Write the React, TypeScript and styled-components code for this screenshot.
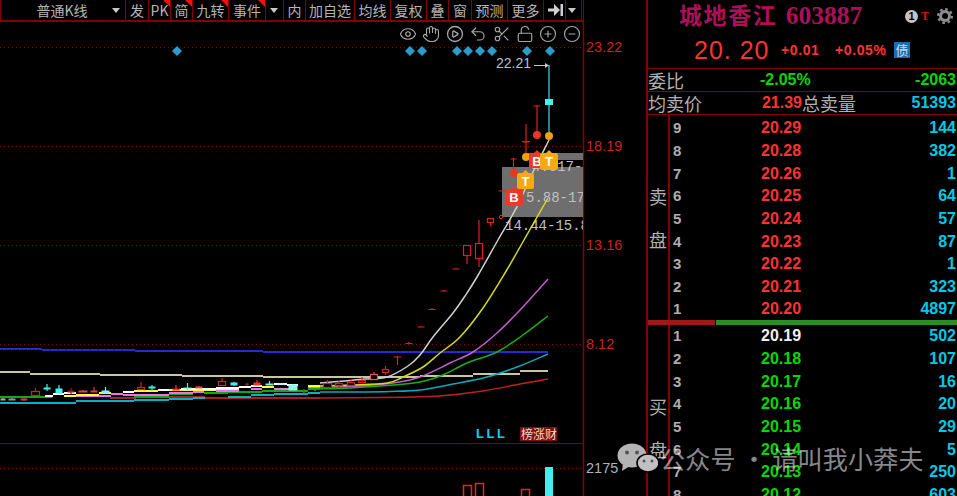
import React from "react";
import styled, { createGlobalStyle } from "styled-components";
import { Eye, Hand, CirclePlay, Undo2, Scissors, LockOpen, CirclePlus, CircleMinus } from "lucide-react";

const Global = createGlobalStyle`
  html, body { margin: 0; padding: 0; background: #000; overflow: hidden; }
  #root { width: 957px; height: 496px; }
`;

const CJK = `"Noto Sans CJK SC", "Liberation Sans", sans-serif`;
const DIGIT = `"Liberation Sans", "Noto Sans CJK SC", sans-serif`;
const LINE = "#860000";

const Page = styled.div`
  position: relative;
  display: flex;
  width: 957px;
  height: 496px;
  overflow: hidden;
  background: #000;
  font-family: ${CJK};
`;
const Left = styled.div`
  display: flex;
  flex-direction: column;
  width: 646px;
  flex: none;
`;
const ChartWrap = styled.div`
  position: relative;
  flex: 1;
  height: 474px;
`;
const Toolbar = styled.div`
  display: flex;
  width: 584px;
  height: 22px;
  box-sizing: border-box;
  border-bottom: 2px solid ${LINE};
  border-left: 1px solid ${LINE};
  border-right: 1px solid ${LINE};
  flex: none;
`;
const Tab = styled.div<{ $w: number; $flag?: boolean; $align?: string }>`
  position: relative;
  width: ${(p) => p.$w}px;
  flex: none;
  box-sizing: border-box;
  border-right: 1px solid ${LINE};
  display: flex;
  align-items: center;
  justify-content: ${(p) => p.$align || "center"};
  color: #b4b4b4;
  font-size: 14px;
  line-height: 20px;
  white-space: nowrap;
  overflow: hidden;
  &::after {
    content: "";
    display: ${(p) => (p.$flag ? "block" : "none")};
    position: absolute;
    top: 0;
    right: 0;
    border-top: 7px solid #f01010;
    border-left: 7px solid transparent;
  }
`;
const Caret = styled.span`
  position: absolute;
  right: 5px;
  top: 8px;
  border-top: 5px solid #c8c8c8;
  border-left: 4.5px solid transparent;
  border-right: 4.5px solid transparent;
`;
const MainLabel = styled.span`
  margin-left: 6px;
  margin-right: 8px;
`;
const ChartSvg = styled.svg`
  display: block;
`;
const IconRow = styled.div`
  position: absolute;
  top: 3px;
  left: 399px;
  display: flex;
  gap: 5.4px;
  color: #a8a8a8;
`;

const Right = styled.div`
  width: 311px;
  flex: none;
  box-sizing: border-box;
  border-left: 2px solid ${LINE};
  display: flex;
  flex-direction: column;
`;
const TitleRow = styled.div`
  height: 32px;
  display: flex;
  align-items: center;
  padding-left: 31px;
  flex: none;
`;
const Title = styled.div`
  color: #ad1058;
  font-weight: 700;
  font-size: 23px;
  letter-spacing: 1.6px;
  white-space: nowrap;
  line-height: 30px;
  width: 226px;
  flex: none;
  font-family: "Liberation Serif", "Noto Sans CJK SC", serif;
`;
const TitleCode = styled.span`
  font-size: 25.5px;
  letter-spacing: 0;
  margin-left: 1px;
`;
const InfoDot = styled.span`
  width: 13px;
  height: 13px;
  border-radius: 50%;
  background: #c4c4c4;
  color: #000;
  font: 700 11px/13px "Liberation Sans", sans-serif;
  text-align: center;
`;
const RedT = styled.span`
  color: #e01010;
  font: 700 12px/13px "Liberation Serif", serif;
  margin-left: 3px;
`;
const Gear = styled.svg`
  margin-left: 8px;
`;
const PriceRow = styled.div`
  height: 37px;
  box-sizing: border-box;
  padding-left: 46px;
  display: flex;
  align-items: center;
  flex: none;
  border-bottom: 1px solid ${LINE};
  color: #ff3232;
`;
const BigPrice = styled.span`
  font: 400 25px/30px "Liberation Sans", sans-serif;
  letter-spacing: 1px;
  width: 87px;
  white-space: pre;
`;
const Delta = styled.span<{ $w: number }>`
  font: 700 14px/20px "Liberation Sans", sans-serif;
  letter-spacing: 0.6px;
  width: ${(p) => p.$w}px;
`;
const BondTag = styled.span`
  width: 16px;
  height: 16px;
  background: #1f6bb0;
  color: #c8dcf0;
  font-size: 13px;
  line-height: 16px;
  text-align: center;
`;
const StatRow = styled.div`
  height: 23px;
  flex: none;
  box-sizing: border-box;
  border-bottom: 1px solid ${LINE};
  display: grid;
  grid-template-columns: 112px 42px 1fr;
  align-items: center;
  position: relative;
`;
const StatLabel = styled.span`
  color: #b0b0b0;
  font-size: 18px;
  line-height: 22px;
  white-space: nowrap;
`;
const Num = styled.span<{ $c: string; $right?: boolean }>`
  color: ${(p) => p.$c};
  font: 700 16px/20px ${DIGIT};
  text-align: ${(p) => (p.$right ? "right" : "left")};
  white-space: nowrap;
  direction: ${(p) => (p.$right ? "rtl" : "ltr")};
  unicode-bidi: plaintext;
`;
const StatTail = styled.div`
  display: flex;
  justify-content: space-between;
  align-items: center;
  padding-right: 1px;
`;
const Book = styled.div`
  display: flex;
  height: 205px;
  flex: none;
`;
const Side = styled.div`
  width: 22px;
  flex: none;
  box-sizing: border-box;
  border-right: 2px solid ${LINE};
  display: flex;
  flex-direction: column;
  justify-content: center;
  align-items: center;
  gap: 20px;
  color: #b0b0b0;
  font-size: 18px;
  line-height: 23px;
`;
const Rows = styled.div<{ $top: number }>`
  flex: 1;
  display: grid;
  padding-top: ${(p) => p.$top}px;
  grid-auto-rows: 22.65px;
`;
const Row = styled.div`
  display: grid;
  grid-template-columns: 88px 1fr;
  align-items: center;
  padding-left: 3px;
  position: relative;
`;
const Level = styled.span`
  color: #aeaeae;
  font: 700 15px/20px ${DIGIT};
`;
const Price = styled.span<{ $c: string }>`
  color: ${(p) => p.$c};
  font: 700 16px/20px ${DIGIT};
`;
const Vol = styled.span`
  position: absolute;
  right: 1px;
  color: #00c8e6;
  font: 700 16px/20px ${DIGIT};
`;
const Split = styled.div`
  height: 5px;
  flex: none;
  display: flex;
  gap: 1px;
`;
const SplitBar = styled.div<{ $c: string; $w?: number }>`
  background: ${(p) => p.$c};
  ${(p) => (p.$w ? `width: ${p.$w}px; flex: none;` : "flex: 1;")}
`;

const Watermark = styled.div`
  position: absolute;
  left: 617px;
  top: 442px;
  display: flex;
  align-items: center;
  gap: 2px;
  color: rgba(255, 255, 255, 0.55);
  font-size: 25px;
  line-height: 32px;
  white-space: nowrap;
  letter-spacing: 0.2px;
  pointer-events: none;
`;

type C = [number, number, number, number, number, number, string, boolean];
const R = "#d82020";
const CY = "#40f0f0";
const candles: C[] = [
  [0, 6, 398, 400, 398, 400, "#b0a090", true],
  [8, 16, 398, 400, 398, 400, "#909090", true],
  [20, 28, 398, 400, 398, 401, "#e03030", true],
  [31, 40, 391, 396, 388, 396, R, false],
  [43, 51, 387, 389, 384, 391, CY, true],
  [55, 63, 388, 393, 385, 393, CY, true],
  [67, 75, 390, 392, 388, 394, "#a01818", true],
  [78, 88, 390, 392, 390, 392, "#e84040", true],
  [90, 98, 390, 392, 387, 392, "#d84040", true],
  [101, 110, 390, 393, 387, 393, "#80f8e8", true],
  [137, 145, 387, 390, 382, 390, R, false],
  [148, 156, 386, 388, 385, 391, CY, true],
  [172, 180, 388, 390, 385, 390, "#ff3030", true],
  [183, 192, 387, 388, 383, 390, CY, true],
  [195, 203, 386, 388, 386, 388, "#ff4040", true],
  [218, 226, 381, 386, 378, 386, R, false],
  [230, 238, 382, 385, 382, 386, CY, true],
  [245, 249, 383, 385, 383, 385, "#a02020", true],
  [253, 261, 382, 385, 380, 385, "#ff3030", true],
  [265, 274, 383, 385, 381, 385, "#80e8e8", true],
  [276, 285, 383, 384, 383, 384, "#90f0e0", true],
  [288, 298, 384, 390, 384, 390, "#90f8e0", true],
  [303, 305, 389, 393, 389, 393, "#607020", true],
  [314, 316, 389, 391, 389, 391, "#607020", true],
  [323, 332, 383, 388, 380, 388, R, false],
  [335, 343, 383, 386, 381, 388, R, false],
  [347, 355, 382, 386, 380, 386, R, false],
  [358, 366, 380, 383, 377, 383, R, false],
  [370, 378, 374, 380, 372, 380, "#ff5050", false],
  [382, 389, 369, 373, 366, 375, R, false],
  [393, 402, 356, 357, 356, 365, "#e02020", true],
  [405, 413, 342.5, 343.5, 342, 344, "#e02020", true],
  [417, 425, 326, 327, 326, 327, "#e02020", true],
  [428, 436, 308.5, 309.5, 308, 310, "#e02020", true],
  [440, 448, 290, 291, 290, 291, "#e02020", true],
  [452, 460, 268, 269, 268, 269, "#e02020", true],
  [463, 471, 245, 256, 245, 264, "#e02020", false],
  [475, 483, 243, 259, 220, 267, "#e02020", false],
  [487, 494, 218, 223, 218, 226, "#e02020", false],
  [498, 513, 190, 191, 190, 191, "#e02020", true],
  [510, 517, 158, 159, 158, 172, "#e02020", true],
  [522, 530, 141, 142, 124, 153, "#e02020", true],
  [533, 541, 105, 106, 105, 132, "#e02020", true],
];

// Catmull-Rom through the sampled curve points
const smooth = (p: number[][]) => {
  let d = `M${p[0][0]},${p[0][1]}`;
  for (let i = 0; i < p.length - 1; i++) {
    const a = p[Math.max(i - 1, 0)];
    const b = p[i];
    const c = p[i + 1];
    const e = p[Math.min(i + 2, p.length - 1)];
    d += `C${b[0] + (c[0] - a[0]) / 6},${b[1] + (c[1] - a[1]) / 6} ${c[0] - (e[0] - b[0]) / 6},${c[1] - (e[1] - b[1]) / 6} ${c[0]},${c[1]}`;
  }
  return d;
};

const curves: [string, number[][]][] = [
  ["#c02020", [[320, 398], [380, 397.5], [412, 397], [440, 396], [483, 391], [520, 384], [548, 379]]],
  ["#10a8b8", [[320, 392], [350, 392], [390, 391.5], [420, 390], [453, 384], [487, 377], [517, 367], [548, 354]]],
  ["#18b018", [[320, 389], [350, 388], [387, 385.5], [420, 382], [443, 375], [467, 363], [497, 352], [523, 335], [548, 316]]],
  ["#c060c8", [[320, 387], [350, 386.5], [393, 383], [420, 377], [450, 363], [473, 352], [497, 333], [520, 310], [548, 279]]],
  ["#d8d820", [[320, 386], [350, 385], [387, 383], [403, 377], [423, 367], [440, 353], [460, 337], [483, 308], [505, 273], [524, 240], [548, 198]]],
  ["#d0d0d0", [[320, 383], [345, 381], [365, 379], [387, 377], [408, 366], [420, 355], [433, 337], [453, 313], [465, 296], [477, 277], [498, 240], [517, 206.7], [533, 172], [549, 140]]],
];
const stepLines: [string, number[][]][] = [
  ["#a82020", [[205, 320, 398], [110, 136, 398], [135, 169, 396.7], [169, 205, 396.7]]],
  ["#08b0c0", [[0, 76, 402.5], [76, 134, 401], [134, 169, 400], [169, 193, 399], [193, 205, 398], [228, 251, 396.7], [251, 274, 395.3], [274, 308, 394.3], [308, 320, 392.7]]],
  ["#c8c8a0", [[0, 30, 372], [30, 100, 373.5], [100, 182, 374.5], [182, 263, 375.5], [263, 357, 377], [357, 420, 377], [420, 473, 376], [473, 520, 374], [520, 548, 371]]],
  ["#2828d0", [[0, 42, 348.5], [42, 135, 350], [135, 263, 351], [263, 548, 352]]],
  ["#10a818", [[0, 52, 397], [134, 169, 396.7], [169, 193, 394.3], [204, 228, 393.3], [228, 262, 392], [262, 308, 390.7], [308, 320, 389.3]]],
  ["#f070f0", [[76, 111, 396], [111, 123, 393.5], [123, 169, 395], [169, 193, 393], [193, 204, 392], [216, 239, 391], [251, 262, 389.3], [274, 297, 388.7], [308, 320, 387]]],
  ["#ffff30", [[64, 76, 396], [76, 99, 394.7], [99, 111, 393], [123, 134, 391.7], [134, 158, 390.7], [169, 216, 390], [216, 239, 389], [262, 274, 386.7], [308, 320, 386]]],
  ["#ffffff", [[45, 53, 396], [53, 64, 394], [64, 76, 393], [123, 134, 391.7], [158, 169, 390], [181, 216, 389], [216, 239, 388], [239, 251, 387], [251, 262, 385.7], [274, 287, 384], [287, 298, 385]]],
];

const diamonds = [177, 410, 422, 457, 468, 480, 492, 527, 550];
const grids = [47, 146, 245, 344, 468];
const axis: [string, number, string][] = [
  ["23.22", 52, "#c82424"],
  ["18.19", 151, "#c82424"],
  ["13.16", 250, "#c82424"],
  ["8.12", 349, "#c82424"],
  ["2175", 473, "#a8b4c0"],
];
const badge = (x: number, y: number, w: number, c: string, t: string) => (
  <g key={x}>
    <polygon points={`${x + w / 2 - 3},${y} ${x + w / 2},${y - 3} ${x + w / 2 + 3},${y}`} fill={c} />
    <rect x={x} y={y} width={w} height={w - 1} rx={2} fill={c} />
    <text x={x + w / 2} y={y + 13} textAnchor="middle" fill="#fff" fontFamily="Liberation Sans" fontSize={13} fontWeight={700}>{t}</text>
  </g>
);

function Chart() {
  return (
    <ChartSvg width={646} height={474} viewBox="0 22 646 474">
      <defs>
        <clipPath id="plot"><rect x={0} y={22} width={583} height={474} /></clipPath>
      </defs>
      {grids.map((y) => (
        <line key={y} x1={0} x2={583} y1={y + 0.5} y2={y + 0.5} stroke="#900000" strokeDasharray="1 3" />
      ))}
      <line x1={0} x2={583} y1={443.5} y2={443.5} stroke={LINE} />
      <line x1={583.5} x2={583.5} y1={22} y2={496} stroke={LINE} strokeWidth={1.5} />
      {axis.map(([t, y, c]) => (
        <text key={t} x={586} y={y} fill={c} fontFamily="Liberation Sans" fontSize={14.5}>{t}</text>
      ))}
      {diamonds.map((x) => (
        <polygon key={x} points={`${x},46 ${x + 5},51 ${x},56 ${x - 5},51`} fill="#2c9ccc" />
      ))}
      <g clipPath="url(#plot)">
        <rect x={527} y={153} width={56} height={7} fill="#6e6e6e" />
        <rect x={502} y={167} width={81} height={50} fill="#6e6e6e" />
        <text x={532} y={171} fill="#c0c0c0" fontFamily="Liberation Mono" fontSize={14}>4.817-1</text>
        <text x={526} y={202} fill="#c0c0c0" fontFamily="Liberation Mono" fontSize={14}>5.88-17</text>
        <text x={505} y={230} fill="#c0c0c0" fontFamily="Liberation Mono" fontSize={14}>14.44-15.8</text>
      </g>
      {stepLines.map(([c, segs], i) =>
        segs.map(([a, b, y], j) => (
          <rect key={`${i}-${j}`} x={a} y={Math.round(y) - 1} width={b - a} height={2} fill={c} />
        ))
      )}
      {curves.map(([c, p], i) => (
        <path key={i} d={smooth(p)} fill="none" stroke={c} strokeWidth={1.5} />
      ))}
      {candles.map(([a, b, t, bt, wt, wb, c, f], i) => (
        <g key={i}>
          <line x1={(a + b) / 2} x2={(a + b) / 2} y1={wt} y2={wb} stroke={c} strokeWidth={1.2} />
          <rect x={a + 0.5} y={t + 0.5} width={b - a - 1} height={bt - t - (f ? 0 : 1)} fill={f ? c : "#000"} stroke={c} strokeWidth={f ? 0 : 1.2} />
        </g>
      ))}
      <line x1={522} x2={530} y1={141.5} y2={141.5} stroke="#e02020" />
      <circle cx={514} cy={173} r={4} fill="#e83820" />
      <circle cx={526} cy={157} r={4} fill="#f0a010" />
      <circle cx={537} cy={135} r={4} fill="#e83820" />
      <circle cx={501} cy={217} r={1.7} fill="none" stroke="#d83030" />
      <line x1={549} x2={549} y1={65} y2={132} stroke="#30b0b8" strokeWidth={1.5} />
      <rect x={545} y={99} width={8} height={6} fill="#40f0f0" />
      <circle cx={549} cy={136} r={4} fill="#f0a010" />
      <line x1={534} x2={547} y1={65.5} y2={65.5} stroke="#c8c8c8" />
      <polygon points="545,63 549,65.5 545,68" fill="#c8c8c8" />
      <text x={496} y={68} fill="#b4c0cc" fontFamily="Liberation Sans" fontSize={14}>22.21</text>
      {badge(505, 189, 18, "#e83a2c", "B")}
      {badge(517, 173, 17, "#f8a810", "T")}
      {badge(529, 153, 16, "#e83a2c", "B")}
      {badge(540, 153, 18, "#f8a810", "T")}
      <text x={476} y={438} fill="#10d0f0" fontFamily="Liberation Sans" fontWeight={700} fontSize={13} letterSpacing={2.6}>LLL</text>
      <rect x={520} y={427} width={37} height={14} fill="#801010" />
      <text x={521} y={439} fill="#e8d8d8" fontFamily="Noto Sans CJK SC" fontSize={12}>榜涨财</text>
      <rect x={463.5} y={485.5} width={8} height={12} fill="#000" stroke="#f02020" strokeWidth={1.5} />
      <rect x={475.5} y={483.5} width={8} height={14} fill="#000" stroke="#f02020" strokeWidth={1.5} />
      <rect x={521.5} y={489.5} width={8} height={8} fill="#000" stroke="#f02020" strokeWidth={1.5} />
      <rect x={545} y={467} width={8} height={30} fill="#40f0f0" />
    </ChartSvg>
  );
}

const sells: [string, string, string][] = [
  ["9", "20.29", "144"], ["8", "20.28", "382"], ["7", "20.26", "1"],
  ["6", "20.25", "64"], ["5", "20.24", "57"], ["4", "20.23", "87"],
  ["3", "20.22", "1"], ["2", "20.21", "323"], ["1", "20.20", "4897"],
];
const buys: [string, string, string][] = [
  ["1", "20.19", "502"], ["2", "20.18", "107"], ["3", "20.17", "16"],
  ["4", "20.16", "20"], ["5", "20.15", "29"], ["6", "20.14", "5"],
  ["7", "20.13", "250"], ["8", "20.12", "603"],
];

const tabs: [string, number, boolean][] = [
  ["发", 23, false], ["PK", 22, true], ["简", 22, true], ["九转", 36, true], ["事件", 37, true],
];
const tabs2: [string, number][] = [
  ["内", 22], ["加自选", 49], ["均线", 36], ["复权", 36], ["叠", 22], ["窗", 23], ["预测", 36], ["更多", 36],
];

export default function App() {
  return (
    <Page>
      <Global />
      <Left>
        <Toolbar>
          <Tab $w={125}><MainLabel>普通K线</MainLabel><Caret /></Tab>
          {tabs.map(([t, w, f]) => <Tab key={t} $w={w} $flag={f}>{t}</Tab>)}
          <Tab $w={18}><Caret /></Tab>
          {tabs2.map(([t, w]) => <Tab key={t} $w={w}>{t}</Tab>)}
          <Tab $w={22}>
            <svg width="16" height="12" viewBox="0 0 16 12">
              <path d="M1 4.5h6V0l6 6-6 6V7.5H1zM13.5 0H16v12h-2.5z" fill="#d0d0d0" />
            </svg>
          </Tab>
          <Tab $w={16}><Caret /></Tab>
        </Toolbar>
        <ChartWrap>
          <Chart />
          <IconRow>
            <Eye size={18} strokeWidth={1.5} />
            <Hand size={18} strokeWidth={1.5} />
            <CirclePlay size={18} strokeWidth={1.7} />
            <Undo2 size={18} strokeWidth={1.5} />
            <Scissors size={18} strokeWidth={1.5} />
            <LockOpen size={18} strokeWidth={1.5} />
            <CirclePlus size={18} strokeWidth={1.5} />
            <CircleMinus size={18} strokeWidth={1.5} />
          </IconRow>
        </ChartWrap>
      </Left>
      <Right>
        <TitleRow>
          <Title>城地香江 <TitleCode>603887</TitleCode></Title>
          <InfoDot>1</InfoDot>
          <RedT>T</RedT>
          <Gear width="16" height="16" viewBox="0 0 16 16">
            <circle cx="8" cy="8" r="4.5" fill="none" stroke="#8c8c8c" strokeWidth="3" />
            <circle cx="8" cy="8" r="6.8" fill="none" stroke="#8c8c8c" strokeWidth="2.4" strokeDasharray="2.6 2.74" />
          </Gear>
        </TitleRow>
        <PriceRow>
          <BigPrice>20. 20</BigPrice>
          <Delta $w={54}>+0.01</Delta>
          <Delta $w={59}>+0.05%</Delta>
          <BondTag>债</BondTag>
        </PriceRow>
        <StatRow>
          <StatLabel>委比</StatLabel>
          <Num $c="#00d800" $right>-2.05%</Num>
          <StatTail><span /><Num $c="#00d800" $right>-2063</Num></StatTail>
        </StatRow>
        <StatRow>
          <StatLabel>均卖价</StatLabel>
          <Num $c="#ff3232" $right>21.39</Num>
          <StatTail><StatLabel>总卖量</StatLabel><Num $c="#00c8e6" $right>51393</Num></StatTail>
        </StatRow>
        <Book>
          <Side><span>卖</span><span>盘</span></Side>
          <Rows $top={2}>
            {sells.map(([l, p, v]) => (
              <Row key={l}><Level>{l}</Level><Price $c="#ff3232">{p}</Price><Vol>{v}</Vol></Row>
            ))}
          </Rows>
        </Book>
        <Split>
          <SplitBar $c="#a01818" $w={67} />
          <SplitBar $c="#2a8c2a" />
        </Split>
        <Book>
          <Side><span>买</span><span>盘</span></Side>
          <Rows $top={0}>
            {buys.map(([l, p, v], i) => (
              <Row key={l}><Level>{l}</Level><Price $c={i === 0 ? "#f0f0f0" : "#00d800"}>{p}</Price><Vol>{v}</Vol></Row>
            ))}
          </Rows>
        </Book>
      </Right>
      <Watermark>
        <svg width="41" height="30" viewBox="0 0 41 30">
          <ellipse cx="15" cy="12.5" rx="14.5" ry="12" fill="#b4b4b4" />
          <path d="M6 20 L5 28 L13 23z" fill="#b4b4b4" />
          <circle cx="10" cy="9.5" r="2" fill="#555" />
          <circle cx="20" cy="9.5" r="2" fill="#555" />
          <ellipse cx="31" cy="20" rx="11" ry="9" fill="#c0c0c0" stroke="#000" strokeWidth="1.6" />
          <circle cx="27" cy="18" r="1.5" fill="#555" />
          <circle cx="35" cy="18" r="1.5" fill="#555" />
        </svg>
        <span>公众号 · 请叫我小莽夫</span>
      </Watermark>
    </Page>
  );
}
